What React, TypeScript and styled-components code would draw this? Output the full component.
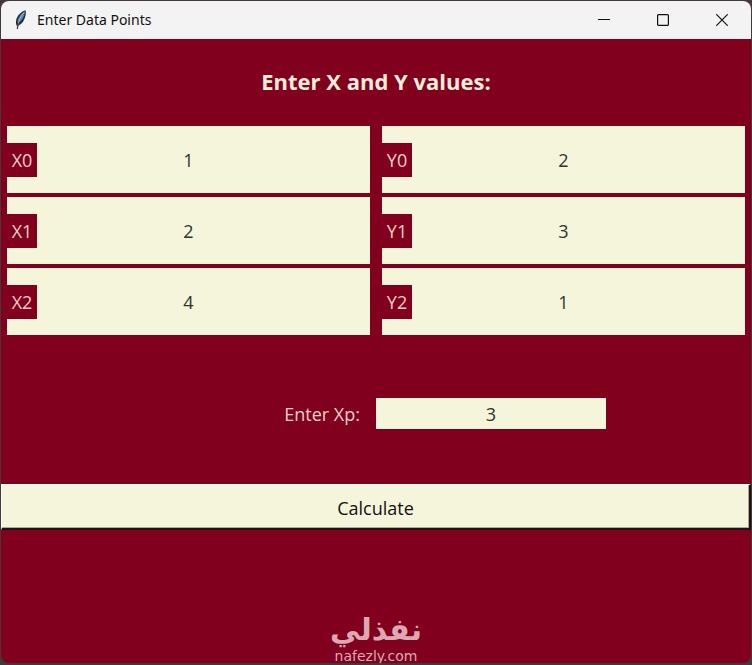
import React, { useState } from 'react';
import styled, { createGlobalStyle } from 'styled-components';

const maroon = '#80001d';
const beige = '#f5f5dc';
const blush = '#efcfc8';

const GlobalStyle = createGlobalStyle`
  * { box-sizing: border-box; }
  body {
    margin: 0;
    background: #45383b;
    font-family: 'Open Sans', 'Noto Sans', sans-serif;
  }
`;

const Desktop = styled.div`
  min-height: 100vh;
  padding: 1px 1px 2px;
  display: flex;
`;

const Window = styled.main`
  flex: 1;
  display: flex;
  flex-direction: column;
  border-radius: 8px;
  overflow: hidden;
  background: ${maroon};
`;

const TitleBar = styled.header`
  display: flex;
  align-items: center;
  height: 38px;
  padding-left: 12px;
  background: #f3f3f3;
  color: #111;
`;

const Title = styled.span`
  flex: 1;
  margin-left: 8px;
  font-family: 'Noto Sans', 'Open Sans', sans-serif;
  font-size: 14px;
  line-height: 20px;
`;

const WindowButton = styled.button`
  width: 59px;
  height: 38px;
  padding: 0;
  border: 0;
  background: transparent;
  color: #111;
  display: grid;
  place-items: center;
`;

const Heading = styled.h1`
  margin: 25px 0 0;
  text-align: center;
  font-size: 22px;
  line-height: 34px;
  font-weight: 700;
  color: #fbeedc;
`;

const PointGrid = styled.div`
  display: grid;
  grid-template-columns: 1fr 1fr;
  gap: 4px 12px;
  margin: 28px 6px 0;
`;

const PointField = styled.div`
  position: relative;
  display: flex;
`;

const PointLabel = styled.label`
  position: absolute;
  left: 0;
  top: 17px;
  width: 30px;
  height: 34px;
  display: grid;
  place-items: center;
  background: ${maroon};
  color: ${blush};
  font-size: 18px;
  line-height: 34px;
`;

const Entry = styled.input<{ $height: number }>`
  width: 100%;
  height: ${(p) => p.$height}px;
  padding: 0;
  border: 0;
  border-radius: 0;
  outline: 0;
  background: ${beige};
  color: #2c3330;
  text-align: center;
  font-family: inherit;
  font-size: 18px;
`;

const TargetRow = styled.div`
  display: grid;
  grid-template-columns: 1fr 1fr;
  align-items: center;
  margin-top: 63px;
`;

const TargetLabel = styled.label`
  justify-self: end;
  padding-right: 16px;
  color: ${blush};
  font-size: 18px;
  line-height: 30px;
`;

const TargetEntry = styled(Entry)`
  width: 230px;
`;

const CalculateButton = styled.button`
  height: 46px;
  margin-top: 55px;
  padding: 3px 0 0;
  border: solid;
  border-width: 1px 2px 2px 1px;
  border-color: #fff #1d1413 #1d1413 #fff;
  box-shadow: inset -1px -1px #a9a995;
  background: ${beige};
  color: #111;
  font-family: inherit;
  font-size: 18px;
`;

const Brand = styled.footer`
  margin-top: auto;
  display: flex;
  flex-direction: column;
  align-items: center;
  color: #dba9b4;
`;

const BrandName = styled.span`
  font-family: 'DejaVu Sans', sans-serif;
  font-size: 30px;
  line-height: 38px;
  font-weight: 700;
`;

const BrandSite = styled.span`
  font-family: 'DejaVu Sans', sans-serif;
  font-size: 14px;
  line-height: 14px;
`;

const Feather = () => (
  <svg width="16" height="22" viewBox="0 0 16 22" aria-hidden="true">
    <path d="M12.6 1.2C8.500 2.200 3.800 6.500 3.100 11.500c-.3 2.200-.2 4 .9 5.700 2-.5 5.200-2.800 6.600-5.500 1.700-3 2.900-7.500 2-10.500z" fill="#262d3a" />
    <path d="M11.900 2.400C8 4.500 5 8.300 4.500 13.500l3-1.300c2.200-2 4.100-5.500 4.400-9.800z" fill="#5580bd" />
    <path d="M11.500 3C8 6.500 6 11 4.800 17" fill="none" stroke="#b4c8e0" strokeWidth=".8" />
    <path d="M5.300 14.500L4.300 20" stroke="#333" strokeWidth="1.200" />
  </svg>
);

type Field = { name: string; value: string };

const points: Field[] = [
  { name: 'X0', value: '1' },
  { name: 'Y0', value: '2' },
  { name: 'X1', value: '2' },
  { name: 'Y1', value: '3' },
  { name: 'X2', value: '4' },
  { name: 'Y2', value: '1' },
];

export default function App() {
  const [values, setValues] = useState<Record<string, string>>(
    Object.fromEntries([...points, { name: 'Xp', value: '3' }].map((f) => [f.name, f.value])),
  );
  const update = (name: string) => (e: React.ChangeEvent<HTMLInputElement>) =>
    setValues({ ...values, [name]: e.target.value });

  return (
    <>
      <GlobalStyle />
      <Desktop>
        <Window>
          <TitleBar>
            <Feather />
            <Title>Enter Data Points</Title>
            <WindowButton aria-label="Minimize">
              <svg width="12" height="12" viewBox="0 0 12 12" stroke="currentColor"><path d="M0 5.500H12" /></svg>
            </WindowButton>
            <WindowButton aria-label="Maximize">
              <svg width="12" height="12" viewBox="0 0 12 12" fill="none" stroke="currentColor" strokeWidth="1.200"><rect x=".6" y=".6" width="10.800" height="10.800" rx="1" /></svg>
            </WindowButton>
            <WindowButton aria-label="Close">
              <svg width="12" height="12" viewBox="0 0 12 12" stroke="currentColor" strokeWidth="1.200"><path d="M.3.3l11.400 11.400M11.700.3L.3 11.700" /></svg>
            </WindowButton>
          </TitleBar>
          <Heading>Enter X and Y values:</Heading>
          <PointGrid>
            {points.map(({ name }) => (
              <PointField key={name}>
                <Entry id={name} $height={67} value={values[name]} onChange={update(name)} />
                <PointLabel htmlFor={name}>{name}</PointLabel>
              </PointField>
            ))}
          </PointGrid>
          <TargetRow>
            <TargetLabel htmlFor="Xp">Enter Xp:</TargetLabel>
            <TargetEntry id="Xp" $height={31} value={values.Xp} onChange={update('Xp')} />
          </TargetRow>
          <CalculateButton type="button">Calculate</CalculateButton>
          <Brand>
            <BrandName lang="ar" dir="rtl">نفذلي</BrandName>
            <BrandSite>nafezly.com</BrandSite>
          </Brand>
        </Window>
      </Desktop>
    </>
  );
}
